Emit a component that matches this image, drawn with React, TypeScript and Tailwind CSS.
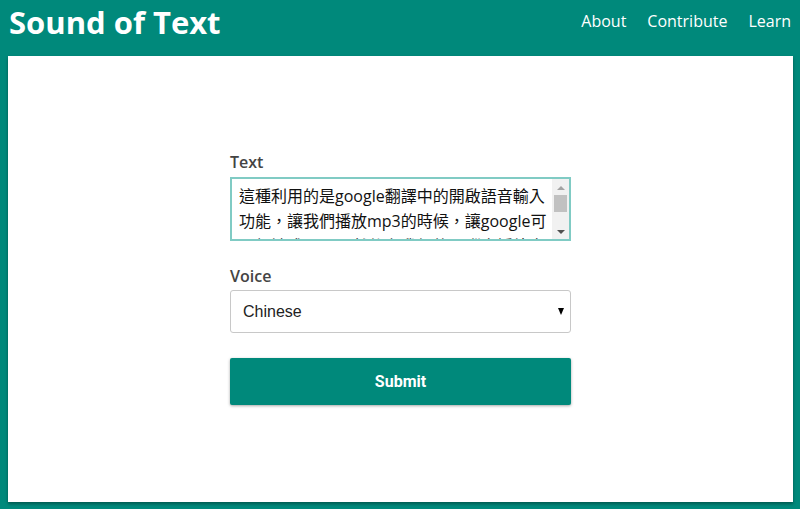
export default function App() {
    const text =
        '這種利用的是google翻譯中的開啟語音輸入功能，讓我們播放mp3的時候，讓google可以朗讀成mp3，然後在我們的電腦中播放出來，再錄下聲音。';

    return (
        <div className="flex h-[509px] w-[800px] flex-col overflow-hidden bg-[#00897b]" style={{ fontFamily: '"Open Sans", sans-serif' }}>
            {/* Header */}
            <header className="flex h-[56px] shrink-0 items-start justify-between px-[9px]">
                <h1 className="mt-[2px] text-[31px] font-bold leading-[40px] text-white">Sound of Text</h1>
                <nav className="mt-[9px] flex gap-[21px] text-[16px] leading-[24px] text-white">
                    <a href="#">About</a>
                    <a href="#">Contribute</a>
                    <a href="#">Learn</a>
                </nav>
            </header>

            {/* Card */}
            <main className="mx-[8px] mr-[7px] h-[446px] shrink-0 bg-white pt-[96px] shadow-[0_2px_3px_rgba(0,0,0,0.35)]">
                <form className="mx-auto flex w-[341px] flex-col">
                    <label className="mb-[5px] text-[16px] font-semibold leading-[20px] text-[#444]">Text</label>
                    <div className="flex h-[64px] border-2 border-[#80cbc4]">
                        <textarea
                            defaultValue={text}
                            spellCheck={false}
                            className="h-full flex-1 resize-none overflow-hidden pl-[7px] pr-[3px] pt-[5px] text-[16px] leading-[25px] text-[#111] outline-none"
                            style={{ fontFamily: '"Open Sans", "Noto Sans CJK TC", sans-serif' }}
                        />
                        {/* scrollbar */}
                        <div className="flex w-[17px] flex-col items-center bg-[#f1f1f1]">
                            <span className="mt-[7px] h-0 w-0 border-x-[4px] border-b-[4px] border-x-transparent border-b-[#a3a3a3]" />
                            <span className="mt-[5px] h-[17px] w-[13px] bg-[#c1c1c1]" />
                            <span className="mt-auto mb-[5px] h-0 w-0 border-x-[4px] border-t-[4px] border-x-transparent border-t-[#505050]" />
                        </div>
                    </div>

                    <label className="mb-[4px] mt-[25px] text-[16px] font-semibold leading-[20px] text-[#444]">Voice</label>
                    <div className="relative">
                        <select
                            className="h-[43px] w-full appearance-none rounded-[3px] border border-[#c8c8c8] bg-white px-[12px] text-[16px] text-[#222]"
                            style={{ fontFamily: '"Liberation Sans", Arial, sans-serif' }}
                            defaultValue="zh"
                        >
                            <option value="zh">Chinese</option>
                        </select>
                        <span className="pointer-events-none absolute right-[7px] top-[18px] h-0 w-0 border-x-[3.5px] border-t-[7px] border-x-transparent border-t-black" />
                    </div>

                    <button
                        type="button"
                        className="mt-[25px] h-[47px] rounded-[2px] bg-[#00897b] text-[16px] font-bold text-white shadow-[0_1px_3px_rgba(0,0,0,0.35)]"
                        style={{ fontFamily: 'Roboto, "Liberation Sans", sans-serif' }}
                    >
                        Submit
                    </button>
                </form>
            </main>
        </div>
    );
}
